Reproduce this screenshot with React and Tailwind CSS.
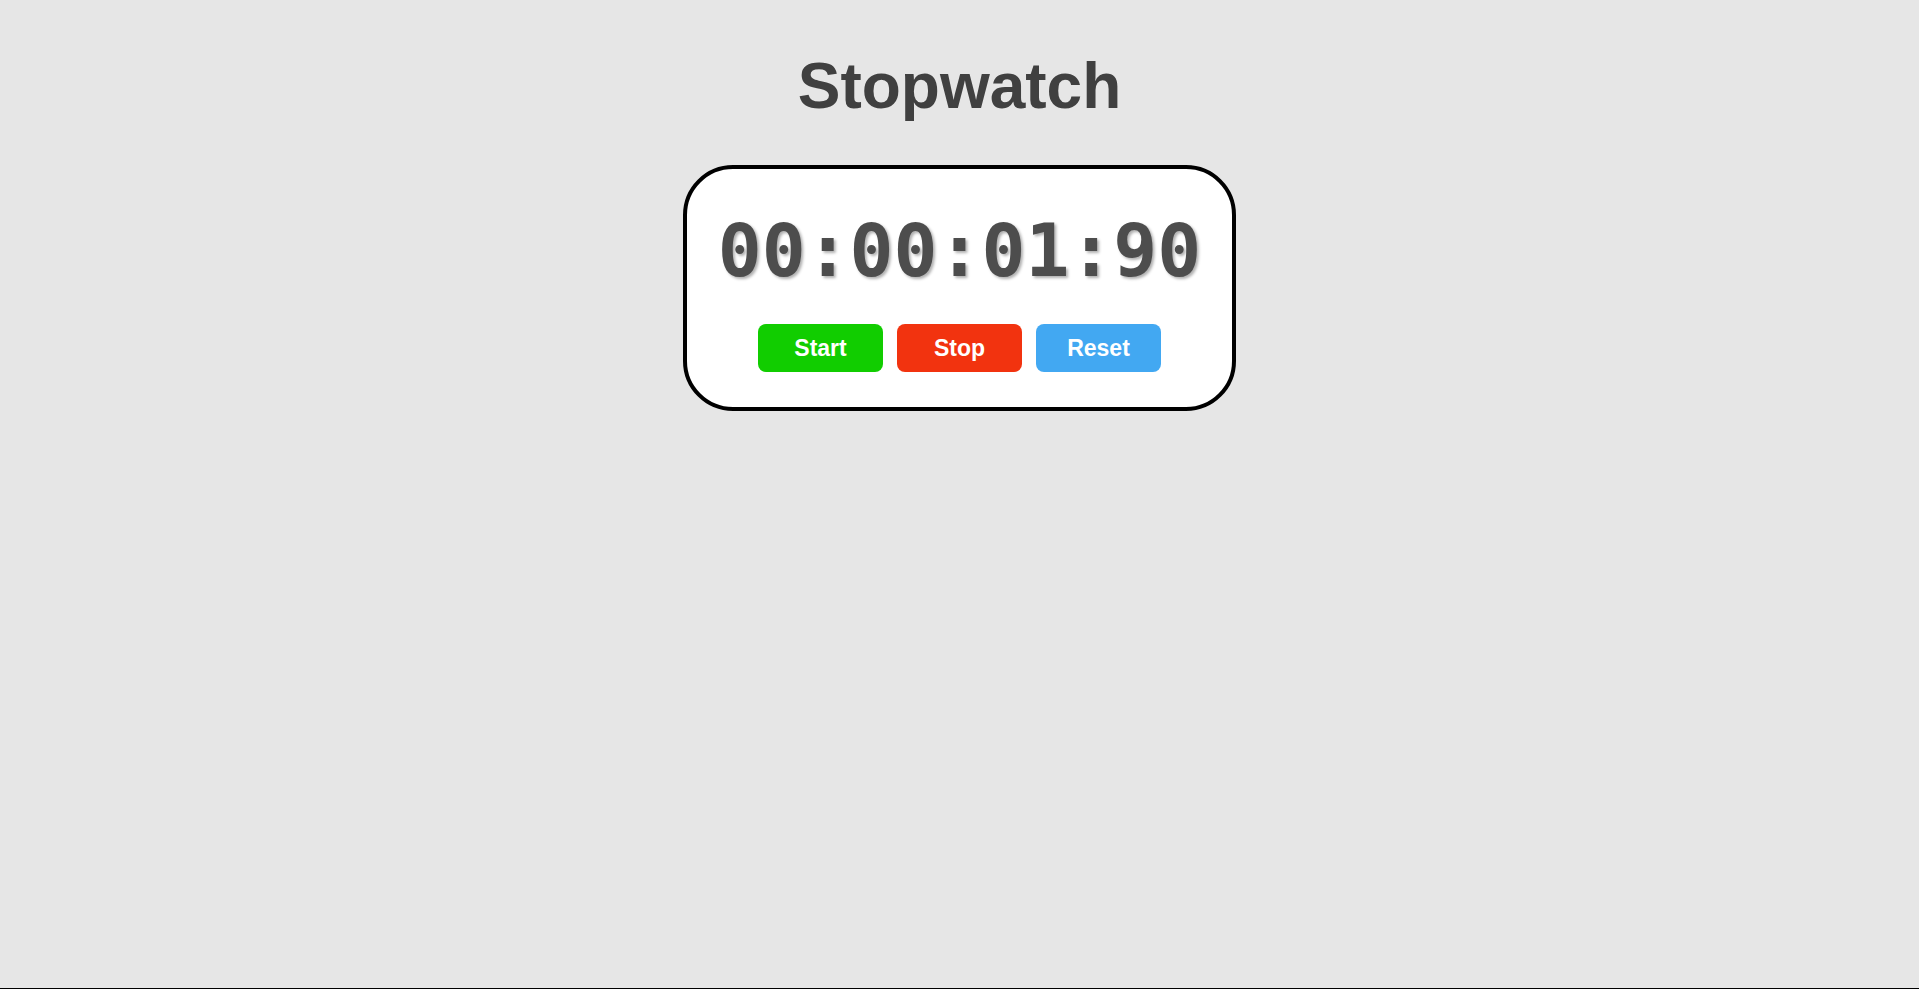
import { useEffect, useRef, useState } from 'react'

const pad = (n) => String(n).padStart(2, '0')

function format(cs) {
  const h = Math.floor(cs / 360000)
  const m = Math.floor((cs % 360000) / 6000)
  const s = Math.floor((cs % 6000) / 100)
  const c = cs % 100
  return `${pad(h)}:${pad(m)}:${pad(s)}:${pad(c)}`
}

export default function App() {
  const [time, setTime] = useState(190)
  const [running, setRunning] = useState(false)
  const timer = useRef(null)

  useEffect(() => {
    if (!running) return
    timer.current = setInterval(() => setTime((t) => t + 1), 10)
    return () => clearInterval(timer.current)
  }, [running])

  return (
    <div className="min-h-screen bg-[#e6e6e6] border-b border-black flex flex-col items-center font-['Liberation_Sans',Arial,sans-serif]">
      <h1 className="mt-[54px] text-[64px] leading-none font-bold text-[#404040]">Stopwatch</h1>

      <div className="mt-[47px] w-[553px] bg-white border-4 border-black rounded-[50px] flex flex-col items-center pt-[45px] pb-[35px]">
        <div className="text-[73px] leading-none font-bold text-[#4d4d4d] font-['DejaVu_Sans_Mono',monospace] [text-shadow:2px_2px_3px_#b0b0b0]">
          {format(time)}
        </div>

        <div className="mt-[37px] flex gap-[14px]">
          <button
            onClick={() => setRunning(true)}
            className="w-[125px] h-[48px] rounded-lg bg-[#11cd00] text-white text-[23px] font-bold"
          >
            Start
          </button>
          <button
            onClick={() => setRunning(false)}
            className="w-[125px] h-[48px] rounded-lg bg-[#f2330f] text-white text-[23px] font-bold"
          >
            Stop
          </button>
          <button
            onClick={() => {
              setRunning(false)
              setTime(0)
            }}
            className="w-[125px] h-[48px] rounded-lg bg-[#42a8f2] text-white text-[23px] font-bold"
          >
            Reset
          </button>
        </div>
      </div>
    </div>
  )
}
